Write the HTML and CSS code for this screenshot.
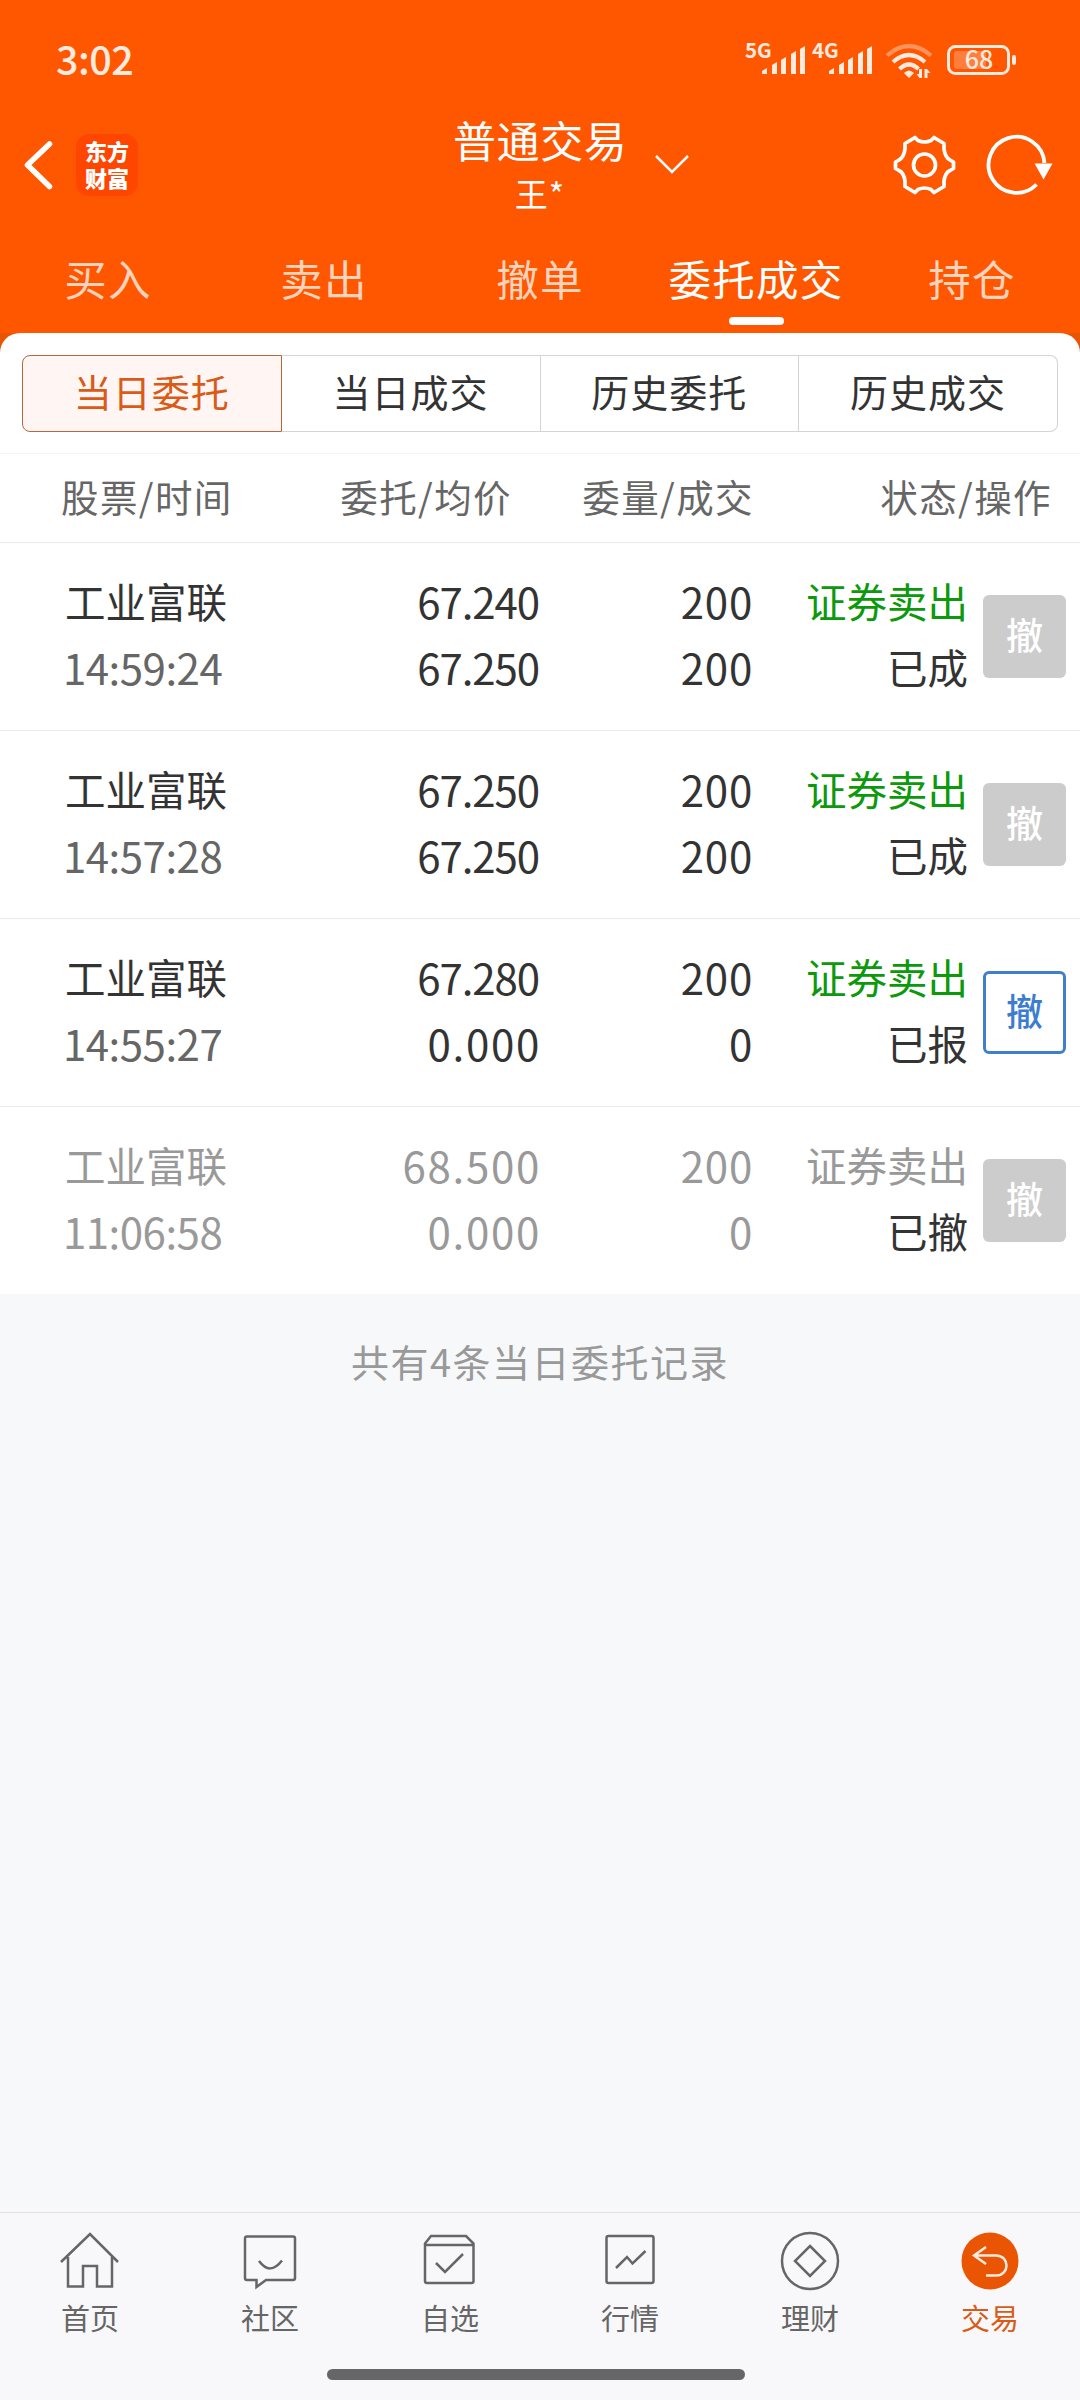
FILE: index.html
```html
<!DOCTYPE html>
<html lang="zh-CN">
<head>
    <meta charset="UTF-8">
    <meta name="viewport" content="width=device-width, initial-scale=1.0">
    <title>普通交易</title>
    <link rel="stylesheet" href="styles.css">
</head>
<body>
    <header>
        <div class="status-bar">
            <span class="clock">3:02</span>
            <svg class="status-icons" width="276" height="40" viewBox="0 0 276 40" fill="#ffeadf">
                <text class="net-label" x="5" y="18">5G</text>
                <path d="M22 34v-3l5-3v6zM32 34V25l5-3v12zM41 34V20l5-3v17zM51 34V14l5-3v23zM60 34V9l5-3v28z"/>
                <text class="net-label" x="72" y="18">4G</text>
                <path d="M89 34v-3l5-3v6zM99 34V25l5-3v12zM108 34V20l5-3v17zM118 34V14l5-3v23zM127 34V9l5-3v28z"/>
                <g fill="none" stroke="#ffeadf" stroke-width="4.2">
                    <path d="M147 15.500Q169 -3.500 191 15.500" stroke="#ff935c"/>
                    <path d="M153 22Q169 8 185 22"/>
                    <path d="M159.500 29Q169 20 178.500 29"/>
                </g>
                <path d="M164 33q5-5 10 0l-5 5zM182 29v9h-2.500l-3-4h2.500v-5zM184.500 38V29h2.500l3.500 4h-3v5z"/>
                <rect x="208.500" y="6.500" width="60" height="27" rx="7" fill="none" stroke="#ffeadf" stroke-width="3"/>
                <rect x="214" y="11" width="32" height="18" rx="3" fill="#ff7d3d"/>
                <rect x="272" y="15" width="4" height="10" rx="2"/>
                <text class="battery-label" x="239" y="29">68</text>
            </svg>
        </div>
        <div class="title-bar">
            <div class="title-left">
                <svg width="32" height="52" viewBox="0 0 32 52" fill="none" stroke="#fff" stroke-width="5.500" stroke-linecap="round" stroke-linejoin="round"><path d="M27.500 5L5.500 26l22 21.500"/></svg>
                <div class="logo"><div>东方</div><div>财富</div></div>
            </div>
            <div class="account">
                <div class="account-type">普通交易</div>
                <div class="account-name">王*</div>
            </div>
            <svg class="chevron" width="36" height="22" viewBox="0 0 36 22" fill="none" stroke="#fff" stroke-width="2.500"><path d="M2 2l16 16L34 2"/></svg>
            <div class="title-right">
                <svg width="63" height="62" viewBox="0 0 63 62" fill="none" stroke="#fff" stroke-width="3.700" stroke-linejoin="round">
                    <path d="M22 3.500L25 6.500Q31.500 9.500 38 6.500L41 3.500L51 9.500V15Q52 23 57 26L60.500 28V34.500L57 36.500Q52 39 51 47V52.500L41 58.500L38 55.500Q31.500 52.500 25 55.500L22 58.500L12 52.500V47Q11 39 6 36.500L2.500 34.500V28L6 26Q11 23 12 15V9.500Z"/>
                    <circle cx="31.500" cy="31" r="11"/>
                </svg>
                <svg width="68" height="62" viewBox="0 0 68 62">
                    <path d="M58.500 29A28 28 0 1 0 50.500 50.500" fill="none" stroke="#fff" stroke-width="3.800"/>
                    <path d="M48.500 29.500H66.500L57.500 45.500z" fill="#fff"/>
                </svg>
            </div>
        </div>
        <nav class="tabs">
            <a>买入</a>
            <a>卖出</a>
            <a>撤单</a>
            <a class="active">委托成交</a>
            <a>持仓</a>
        </nav>
    </header>
    <main>
        <div class="card">
            <div class="segment">
                <span class="seg-item active">当日委托</span>
                <span class="seg-item">当日成交</span>
                <span class="seg-item">历史委托</span>
                <span class="seg-item">历史成交</span>
            </div>
            <div class="row table-head">
                <span>股票/时间</span>
                <span>委托/均价</span>
                <span>委量/成交</span>
                <span>状态/操作</span>
            </div>
            <div class="row order">
                <div class="stock"><div>工业富联</div><div class="time">14:59:24</div></div>
                <div class="price"><div>67.240</div><div>67.250</div></div>
                <div class="amount"><div>200</div><div>200</div></div>
                <div class="state"><div class="sell">证券卖出</div><div>已成</div></div>
                <button class="cancel">撤</button>
            </div>
            <div class="row order">
                <div class="stock"><div>工业富联</div><div class="time">14:57:28</div></div>
                <div class="price"><div>67.250</div><div>67.250</div></div>
                <div class="amount"><div>200</div><div>200</div></div>
                <div class="state"><div class="sell">证券卖出</div><div>已成</div></div>
                <button class="cancel">撤</button>
            </div>
            <div class="row order">
                <div class="stock"><div>工业富联</div><div class="time">14:55:27</div></div>
                <div class="price"><div>67.280</div><div class="wide">0.000</div></div>
                <div class="amount"><div>200</div><div>0</div></div>
                <div class="state"><div class="sell">证券卖出</div><div>已报</div></div>
                <button class="cancel enabled">撤</button>
            </div>
            <div class="row order cancelled">
                <div class="stock"><div>工业富联</div><div class="time">11:06:58</div></div>
                <div class="price"><div class="wide">68.500</div><div class="wide">0.000</div></div>
                <div class="amount"><div>200</div><div>0</div></div>
                <div class="state"><div class="sell">证券卖出</div><div>已撤</div></div>
                <button class="cancel">撤</button>
            </div>
        </div>
    </main>
    <p class="summary">共有4条当日委托记录</p>
    <footer>
        <div class="bottom-nav">
            <a>
                <svg width="60" height="60" viewBox="0 0 60 60"><path d="M1 31L30 3l28 28M8 26v29.500h15V35h14v20.500h15V26"/></svg>
                <span>首页</span>
            </a>
            <a>
                <svg width="60" height="60" viewBox="0 0 60 60"><path d="M7 5.500H53Q55 5.500 55 7.500V47Q55 49 53 49H26L16.500 56V49H7Q5 49 5 47V7.500Q5 5.500 7 5.500zM19 30Q30 45 42 29.500"/></svg>
                <span>社区</span>
            </a>
            <a>
                <svg width="60" height="60" viewBox="0 0 60 60"><path d="M5 12.500L11 5H46L53.500 12.500V50Q53.500 52 51.500 52H7Q5 52 5 50zM5 14H53M16 32L25 41L43 23"/></svg>
                <span>自选</span>
            </a>
            <a>
                <svg width="60" height="60" viewBox="0 0 60 60"><rect x="6.500" y="5" width="47" height="47" rx="2"/><path d="M16 37L27 26L32.500 32.500L45.500 20"/></svg>
                <span>行情</span>
            </a>
            <a>
                <svg width="60" height="60" viewBox="0 0 60 60"><circle cx="30" cy="30" r="28"/><path d="M30 15L45 30L30 45L15 30z"/></svg>
                <span>理财</span>
            </a>
            <a class="active">
                <svg width="60" height="60" viewBox="0 0 60 60"><circle cx="30" cy="30" r="28.500" fill="#ea5504" stroke="none"/><path stroke="#ffeadf" d="M26 16L14 24.500L26 33M15 24.500H36C50 24.500 50 44.500 36 44.500H26"/></svg>
                <span>交易</span>
            </a>
        </div>
        <div class="home-indicator"></div>
    </footer>
</body>
</html>
```

FILE: styles.css
```css
* {
    box-sizing: border-box;
}
body {
    margin: 0;
    width: 1080px;
    height: 2400px;
    display: flex;
    flex-direction: column;
    font-family: "Noto Sans CJK SC", "Noto Sans", sans-serif;
    background-color: #f7f8fa;
    color: #333;
}
header {
    height: 333px;
    background-color: #ff5600;
    color: #fff;
}
.status-bar {
    height: 110px;
    padding: 10px 64px 0 56px;
    display: flex;
    justify-content: space-between;
    align-items: center;
}
.status-icons {
    overflow: visible;
}
.clock {
    margin-bottom: 5px;
    font-size: 39.5px;
    font-weight: 500;
    color: #ffeadf;
    letter-spacing: -0.5px;
}
.net-label {
    font-size: 20.5px;
    font-weight: 700;
}
.battery-label {
    font-size: 25px;
    font-weight: 500;
    text-anchor: middle;
}
.title-bar {
    height: 110px;
    display: grid;
    grid-template-columns: 453px 174px 27px 36px 1fr;
    align-items: center;
}
.title-left {
    display: flex;
    align-items: center;
    gap: 22px;
    padding-left: 22px;
}
.logo {
    width: 62px;
    height: 62px;
    padding-top: 3px;
    border-radius: 13px;
    background-color: #ff4600;
    font-size: 22px;
    font-weight: 900;
    line-height: 27px;
    text-align: center;
}
.account {
    text-align: center;
}
.account-type {
    font-size: 43px;
    line-height: 56px;
    letter-spacing: 0.6px;
    white-space: nowrap;
}
.account-name {
    font-size: 33px;
    line-height: 52px;
    letter-spacing: 1px;
}
.chevron {
    grid-column: 4;
}
.title-right {
    display: flex;
    justify-content: flex-end;
    gap: 30px;
    padding-right: 26px;
}
.tabs {
    height: 113px;
    padding-top: 28px;
    display: grid;
    grid-template-columns: repeat(5, 1fr);
}
.tabs a {
    display: flex;
    flex-direction: column;
    align-items: center;
    font-size: 42.5px;
    line-height: 60px;
    letter-spacing: 1.3px;
    color: #ffd3bc;
}
.tabs a.active {
    color: #fff;
}
.tabs a.active::after {
    content: "";
    width: 55px;
    height: 8px;
    margin-top: 9px;
    border-radius: 4px;
    background-color: #fff;
}
main {
    background: linear-gradient(#e95506 30px, #fff 30px);
}
.card {
    padding-top: 22px;
    border-radius: 20px 20px 0 0;
    background-color: #fff;
}
.segment {
    height: 77px;
    margin: 0 22px 21px;
    display: flex;
}
.seg-item {
    flex: 1;
    border: 1px solid #d4d4d4;
    border-left-width: 0;
    text-align: center;
    font-size: 38px;
    line-height: 69px;
    letter-spacing: 1px;
}
.seg-item:last-child {
    border-radius: 0 8px 8px 0;
}
.seg-item.active {
    border: 1px solid #b5673f;
    border-radius: 8px 0 0 8px;
    background-color: #fff6f3;
    color: #d95b17;
}
.row {
    display: grid;
    border-bottom: 1px solid #ececec;
}
.table-head {
    height: 90px;
    grid-template-columns: 340px 172px 242px 298px;
    border-top: 1px solid #f5f5f5;
    font-size: 37.5px;
    line-height: 84px;
    letter-spacing: 1.4px;
    text-align: right;
    color: #666;
}
.table-head span:first-child {
    padding-left: 61px;
    text-align: left;
}
.order {
    height: 188px;
    grid-template-columns: 299px 240px 214px 215px 98px;
    align-items: center;
    font-size: 42px;
    line-height: 66px;
    text-align: right;
}
.order > div {
    padding-bottom: 5px;
}
.order .stock {
    padding-left: 65px;
    text-align: left;
    font-size: 40.5px;
}
.time {
    margin-left: -2px;
    font-size: 42px;
    letter-spacing: -0.5px;
    color: #666;
}
.price {
    letter-spacing: -1.1px;
}
.price .wide {
    margin-right: -2px;
    letter-spacing: 1.7px;
}
.amount {
    letter-spacing: 0.8px;
}
.state {
    font-size: 40.5px;
}
.sell {
    color: #0c990c;
}
.cancel {
    width: 83px;
    height: 83px;
    padding: 0 0 5px;
    justify-self: end;
    border: none;
    border-radius: 6px;
    background-color: #ccc;
    color: #fff;
    font-family: inherit;
    font-size: 37px;
    font-weight: 500;
}
.cancel.enabled {
    border: 3px solid #427fcb;
    background-color: #fff;
    color: #3c7dd0;
}
.cancelled,
.cancelled .time,
.cancelled .sell {
    color: #999;
}
.cancelled .state {
    color: #333;
}
.cancelled.row {
    border-bottom-color: #f7f8fa;
}
.summary {
    margin: 36px 0 0;
    font-size: 38px;
    line-height: 60px;
    letter-spacing: 1.5px;
    text-align: center;
    color: #999;
}
footer {
    height: 188px;
    margin-top: auto;
    border-top: 1px solid #e2e2e4;
    background-color: #f8f8fb;
}
.bottom-nav {
    height: 156px;
    padding-top: 18px;
    display: grid;
    grid-template-columns: repeat(6, 1fr);
}
.bottom-nav a {
    display: flex;
    flex-direction: column;
    align-items: center;
    font-size: 29px;
    line-height: 53px;
    color: #666;
}
.bottom-nav svg {
    fill: none;
    stroke: #666;
    stroke-width: 2.5;
}
.bottom-nav a.active {
    color: #d95b17;
}
.home-indicator {
    width: 418px;
    height: 11px;
    margin-left: 327px;
    border-radius: 6px;
    background-color: #666;
}
```
